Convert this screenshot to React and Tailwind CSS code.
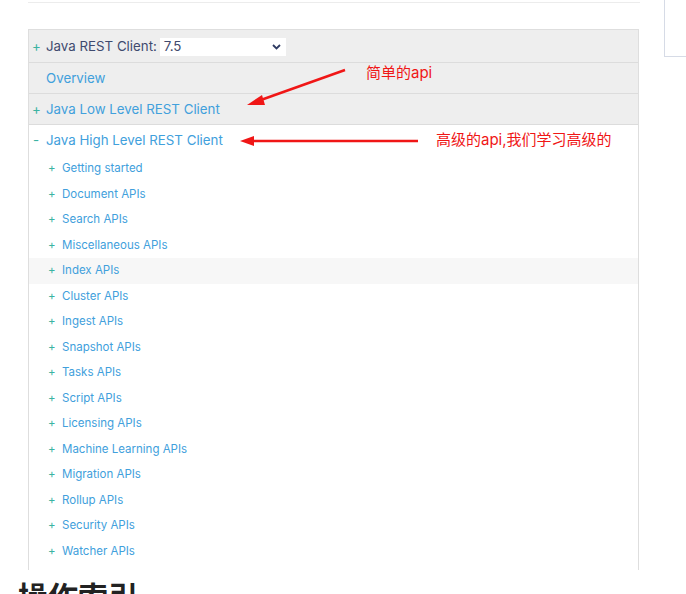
import React from 'react';

const items = [
  'Getting started',
  'Document APIs',
  'Search APIs',
  'Miscellaneous APIs',
  'Index APIs',
  'Cluster APIs',
  'Ingest APIs',
  'Snapshot APIs',
  'Tasks APIs',
  'Script APIs',
  'Licensing APIs',
  'Machine Learning APIs',
  'Migration APIs',
  'Rollup APIs',
  'Security APIs',
  'Watcher APIs',
];

const font = { fontFamily: 'Inter, "Noto Sans CJK SC", sans-serif' };

const App = () => {
  return (
    <div className="relative w-[686px] h-[594px] overflow-hidden bg-white flex" style={font}>
      <div className="w-[664px] pl-[28px]">
        <div className="w-[612px] h-[3px] border-b border-[#ececec]" />

        <div className="mt-[26px] w-[611px] border border-b-0 border-[#dedede]">
          <div className="h-[33px] pt-[1px] bg-[#eeeeee] border-b border-[#dcdcdc] flex items-center text-[13.3px]">
            <span className="w-[17px] pl-[3px] text-[#3cb3a2]">+</span>
            <span className="text-[#3f4a6e]">Java REST Client:</span>
            <div className="ml-[3px] w-[126px] h-[18px] bg-white flex items-center justify-between pl-[4px] pr-[4px] text-[#3f4a6e]">
              <span>7.5</span>
              <svg width="9" height="6" viewBox="0 0 9 6" className="mr-[1px]">
                <path d="M1 1 L4.5 4.5 L8 1" stroke="#2f3b63" strokeWidth="1.8" fill="none" />
              </svg>
            </div>
          </div>
          <div className="h-[31px] pt-[1px] bg-[#eeeeee] border-b border-[#dcdcdc] flex items-center text-[13.3px] pl-[17px] text-[#41a0dc]">
            Overview
          </div>
          <div className="h-[31px] pt-[1px] bg-[#eeeeee] border-b border-[#dcdcdc] flex items-center text-[13.3px]">
            <span className="w-[17px] pl-[3px] text-[#3cb3a2]">+</span>
            <span className="text-[#41a0dc]">Java Low Level REST Client</span>
          </div>
          <div className="h-[31px] pt-[1px] flex items-center text-[13.3px]">
            <span className="w-[17px] pl-[4px] text-[#3cb3a2]">-</span>
            <span className="text-[#41a0dc]">Java High Level REST Client</span>
          </div>
          <div className="pb-[6px]">
            {items.map((t) => (
              <div
                key={t}
                className={`h-[25.5px] flex items-center text-[11.5px] ${t === 'Index APIs' ? 'bg-[#f7f7f7]' : ''}`}
              >
                <span className="w-[33px] pl-[19px] text-[#3cb3a2]">+</span>
                <span className="text-[#41a0dc]">{t}</span>
              </div>
            ))}
          </div>
        </div>

        <div className="mt-[7px] -ml-[10px] text-[30px] font-bold text-[#222] leading-[40px]">操作索引</div>
      </div>

      <div className="w-[22px]">
        <div className="h-[57px] border-l border-b border-[#d6dbe6]" />
      </div>

      <svg className="absolute left-0 top-0 pointer-events-none" width="686" height="594">
        <line x1="345" y1="70" x2="258" y2="101" stroke="#f01616" strokeWidth="2.5" />
        <polygon points="247,105 262,95 265,105" fill="#f01616" />
        <line x1="418" y1="141" x2="252" y2="141" stroke="#f01616" strokeWidth="2.5" />
        <polygon points="240,141 254,136 254,146" fill="#f01616" />
      </svg>
      <div className="absolute left-[366px] top-[62px] text-[15px] text-[#f01616]">简单的api</div>
      <div className="absolute left-[436px] top-[129px] text-[15px] text-[#f01616]">高级的api,我们学习高级的</div>
    </div>
  );
};

export default App;
